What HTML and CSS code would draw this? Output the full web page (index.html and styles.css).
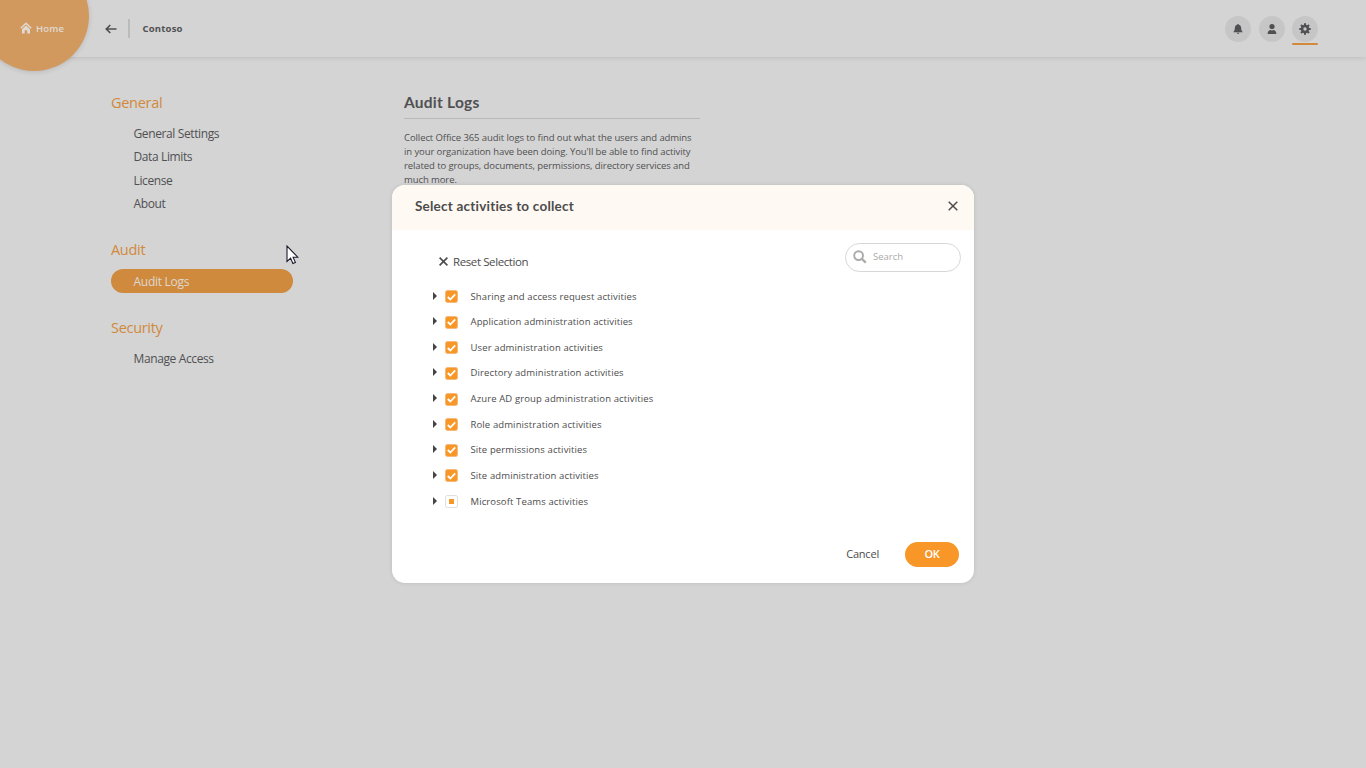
FILE: index.html
```html
<!DOCTYPE html>
<html lang="en">
<head>
<meta charset="utf-8">
<title>Audit Logs</title>
<link rel="stylesheet" href="styles.css">
</head>
<body>
<header class="topbar">
  <a class="home">
    <svg class="home-icon" width="12" height="12" viewBox="0 0 12 12"><path d="M.8 6.2 6 1.2l5.2 5" fill="none" stroke="currentColor" stroke-width="1.5"/><path d="M2 7.3 6 3.6l4 3.7v4.2H7.3V8.3H4.7v3.2H2z" fill="currentColor"/></svg>
    <span class="home-label">Home</span>
  </a>
  <svg class="back" width="12" height="10" viewBox="0 0 12 10"><path d="M11.5 5H1.5M5.3 1 1.3 5l4 4" fill="none" stroke="currentColor" stroke-width="1.7"/></svg>
  <span class="divider"></span>
  <span class="tenant">Contoso</span>
  <nav class="actions">
    <span class="round"><svg width="12" height="12" viewBox="0 0 12 12"><path d="M6 .9c.6 0 .9.4.9.8 1.7.4 2.2 1.8 2.3 3.6.1 1.8.5 2.7 1.6 3.9H1.2c1.1-1.2 1.5-2.1 1.6-3.9.1-1.8.6-3.2 2.3-3.6 0-.4.3-.8.9-.8zM4.8 9.7h2.4c0 .8-.5 1.2-1.2 1.2s-1.2-.4-1.2-1.2z" fill="currentColor"/></svg></span>
    <span class="round"><svg width="12" height="12" viewBox="0 0 12 12"><circle cx="6" cy="3.5" r="2.6" fill="currentColor"/><path d="M1.6 11c0-2.600 1.700-3.900 3-3.900.9.500 1.900.5 2.800 0 1.300 0 3 1.300 3 3.900z" fill="currentColor"/></svg></span>
    <span class="round active"><svg width="12" height="12" viewBox="0 0 12 12"><g stroke="currentColor" stroke-width="2"><path d="M6 .3v11.400M.3 6h11.400M2 2l8 8M10 2l-8 8"/></g><circle cx="6" cy="6" r="4.200" fill="currentColor"/><circle class="gear-hole" cx="6" cy="6" r="1.700"/></svg></span>
  </nav>
</header>
<main class="page">
  <aside class="sidebar">
    <h2 class="group">General</h2>
    <ul class="links"><li>General Settings</li><li>Data Limits</li><li>License</li><li>About</li></ul>
    <h2 class="group">Audit</h2>
    <ul class="links"><li class="selected">Audit Logs</li></ul>
    <h2 class="group">Security</h2>
    <ul class="links"><li>Manage Access</li></ul>
  </aside>
  <section class="content">
    <h1 class="title">Audit Logs</h1>
    <p class="intro">Collect Office 365 audit logs to find out what the users and admins<br>in your organization have been doing. You'll be able to find activity<br>related to groups, documents, permissions, directory services and<br>much more.</p>
  </section>
</main>
<div class="dialog">
  <div class="dialog-head">
    <span class="dialog-title">Select activities to collect</span>
    <svg class="close" width="10" height="10" viewBox="0 0 10 10"><path d="M.7.7l8.600 8.600M9.300.7.7 9.300" stroke="currentColor" stroke-width="1.500"/></svg>
  </div>
  <div class="tools">
    <span class="reset"><svg width="9" height="9" viewBox="0 0 9 9"><path d="M.6.6l7.800 7.800M8.400.6.6 8.400" stroke="currentColor" stroke-width="1.600"/></svg><span class="reset-label">Reset Selection</span></span>
    <span class="search"><svg width="14" height="14" viewBox="0 0 14 14" fill="none" stroke="currentColor"><circle cx="5.600" cy="5.600" r="4.400" stroke-width="1.900"/><path d="M9 9l3.800 3.600" stroke-width="2.400"/></svg><span class="search-label">Search</span></span>
  </div>
  <ul class="tree">
    <li><i class="caret"></i><span class="box on"><svg width="9" height="8" viewBox="0 0 9 8"><path d="M.8 4 3.300 6.500 8.200 1.300" fill="none" stroke="#fff" stroke-width="1.800"/></svg></span><span class="item">Sharing and access request activities</span></li>
    <li><i class="caret"></i><span class="box on"><svg width="9" height="8" viewBox="0 0 9 8"><path d="M.8 4 3.300 6.500 8.200 1.300" fill="none" stroke="#fff" stroke-width="1.800"/></svg></span><span class="item">Application administration activities</span></li>
    <li><i class="caret"></i><span class="box on"><svg width="9" height="8" viewBox="0 0 9 8"><path d="M.8 4 3.300 6.500 8.200 1.300" fill="none" stroke="#fff" stroke-width="1.800"/></svg></span><span class="item">User administration activities</span></li>
    <li><i class="caret"></i><span class="box on"><svg width="9" height="8" viewBox="0 0 9 8"><path d="M.8 4 3.300 6.500 8.200 1.300" fill="none" stroke="#fff" stroke-width="1.800"/></svg></span><span class="item">Directory administration activities</span></li>
    <li><i class="caret"></i><span class="box on"><svg width="9" height="8" viewBox="0 0 9 8"><path d="M.8 4 3.300 6.500 8.200 1.300" fill="none" stroke="#fff" stroke-width="1.800"/></svg></span><span class="item">Azure AD group administration activities</span></li>
    <li><i class="caret"></i><span class="box on"><svg width="9" height="8" viewBox="0 0 9 8"><path d="M.8 4 3.300 6.500 8.200 1.300" fill="none" stroke="#fff" stroke-width="1.800"/></svg></span><span class="item">Role administration activities</span></li>
    <li><i class="caret"></i><span class="box on"><svg width="9" height="8" viewBox="0 0 9 8"><path d="M.8 4 3.300 6.500 8.200 1.300" fill="none" stroke="#fff" stroke-width="1.800"/></svg></span><span class="item">Site permissions activities</span></li>
    <li><i class="caret"></i><span class="box on"><svg width="9" height="8" viewBox="0 0 9 8"><path d="M.8 4 3.300 6.500 8.200 1.300" fill="none" stroke="#fff" stroke-width="1.800"/></svg></span><span class="item">Site administration activities</span></li>
    <li><i class="caret"></i><span class="box partial"></span><span class="item">Microsoft Teams activities</span></li>
  </ul>
  <div class="buttons"><span class="cancel">Cancel</span><span class="ok">OK</span></div>
</div>
<svg class="cursor" width="13" height="20" viewBox="0 0 13 20"><path d="M1 1v15.500l3.600-3.400 2.300 5.400 2.500-1.100-2.300-5.200h4.700z" fill="#fff" stroke="#1b1b2b" stroke-width="1.100"/></svg>
</body>
</html>
```
FILE: styles.css
```css
* { box-sizing: border-box; }
body { margin: 0; height: 768px; overflow: hidden; background: #d4d4d4; color: #505052; font-family: "Open Sans", "Noto Sans", sans-serif; font-size: 12px; }
ul, h1, h2, p { margin: 0; padding: 0; list-style: none; font-weight: 400; }
svg { display: block; flex: none; }
span, li, h1, h2 { white-space: nowrap; }

.topbar { position: relative; display: flex; align-items: center; height: 57px; padding: 0 48px 0 104.5px; box-shadow: 0 1px 5px rgba(0,0,0,.11); }
.home { position: absolute; left: -21px; top: -39px; width: 110px; height: 110px; padding: 61px 0 0 40.5px; border-radius: 50%; background: #d1995e; color: #e0dad3; display: flex; gap: 4.5px; box-shadow: 0 1px 5px rgba(0,0,0,.13); }
.home-label { font-size: 9.5px; line-height: 13px; font-weight: 600; letter-spacing: .2px; }
.divider { width: 2px; height: 19px; margin-left: 11.5px; background: #bbb; }
.tenant { margin-left: 12.5px; padding-bottom: 1px; font-size: 9.5px; font-weight: 700; letter-spacing: .2px; }
.actions { display: flex; gap: 7.5px; margin-left: auto; }
.round { position: relative; width: 26px; height: 26px; border-radius: 50%; background: #c6c6c6; display: flex; align-items: center; justify-content: center; }
.active::after { content: ""; position: absolute; left: 0; top: 27.5px; width: 26px; height: 2px; border-radius: 1px; background: #d1893b; }
.gear-hole { fill: #c6c6c6; }

.page { display: flex; padding: 34px 0 0 111px; }
.sidebar { width: 182px; }
.group { height: 24px; line-height: 24px; font-size: 14.5px; color: #d1893b; letter-spacing: -.3px; }
.links { padding: 7px 0 22px; }
.links li { height: 23.4px; line-height: 24px; padding-left: 22.5px; font-size: 12px; letter-spacing: -.38px; }
.links .selected { height: 24px; margin-bottom: 1px; line-height: 26px; border-radius: 12px; background: #cf8a3d; color: #ddd8d2; letter-spacing: -.28px; }
.content { width: 296px; margin-left: 111px; }
.title { height: 28px; border-bottom: 1px solid #b9b9b9; font: 700 15.5px/23px Lato, sans-serif; letter-spacing: .25px; }
.intro { margin-top: 11.5px; font-size: 9.5px; line-height: 14px; white-space: nowrap; letter-spacing: -.09px; }

.dialog { position: absolute; left: 392px; top: 185px; width: 582px; height: 398px; border-radius: 13px; background: #fff; overflow: hidden; box-shadow: 0 0 4px rgba(0,0,0,.11); color: #4c4c4c; }
.dialog-head { display: flex; align-items: center; justify-content: space-between; height: 44.5px; padding: 0 16.5px 2px 23px; background: #fff9f3; }
.dialog-title { padding-bottom: 1px; font: 700 13.5px/20px Lato, sans-serif; letter-spacing: .22px; }
.tools { display: flex; justify-content: space-between; padding: 13px 13px 0 47px; height: 54.2px; }
.reset { display: flex; align-items: center; gap: 5px; height: 37px; }
.reset-label { font-size: 11.5px; letter-spacing: -.4px; }
.search { display: flex; align-items: center; gap: 6px; width: 116px; height: 29px; padding: 0 0 1px 7px; border: 1px solid #d7d7d7; border-radius: 15px; color: #aaa; }
.search-label { font-size: 9.5px; }
.tree li { display: flex; align-items: center; height: 25.63px; padding-left: 41px; font-size: 9.5px; letter-spacing: .12px; }
.item { padding-bottom: 1px; }
.caret { width: 0; height: 0; border: solid transparent; border-width: 4px 0 4px 4px; border-left-color: #444; margin: -2px 8px 0 0; }
.box { display: flex; align-items: center; justify-content: center; width: 13px; height: 13px; margin-right: 12.5px; border-radius: 2.5px; border: 1px solid #e2ddd8; background: #fff; }
.on { background: #f89728; border-color: #f5b978; }
.partial::after { content: ""; width: 5px; height: 5px; background: #f89728; }
.buttons { display: flex; align-items: center; justify-content: flex-end; gap: 26px; padding: 27.6px 15px 0 0; font-size: 11px; }
.cancel { padding-bottom: 1px; font-size: 11px; letter-spacing: -.2px; }
.ok { width: 54px; height: 25px; border-radius: 13px; background: #f89728; color: #fff; font-weight: 600; line-height: 24px; text-align: center; letter-spacing: -.3px; }
.cursor { position: absolute; left: 285.5px; top: 244.5px; }
```
